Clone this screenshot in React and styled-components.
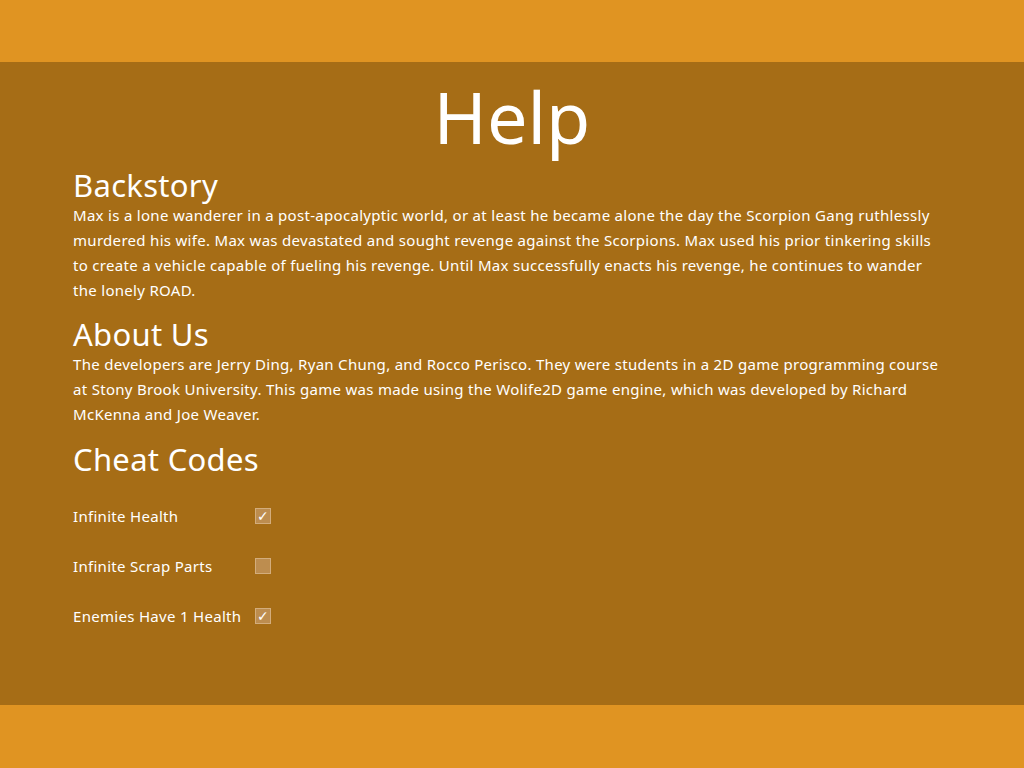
import React, { useState } from "react";
import styled, { createGlobalStyle } from "styled-components";

const GlobalStyle = createGlobalStyle`
    html, body {
        margin: 0;
        padding: 0;
        background: #e09422;
    }
    body {
        font-family: "Noto Sans", "Open Sans", sans-serif;
        color: #ffffff;
    }
`;

const Page = styled.div`
    display: flex;
    flex-direction: column;
    height: 768px;
`;

const Bar = styled.div`
    height: ${(props) => props.size}px;
    background: #e09422;
    flex-shrink: 0;
`;

const Main = styled.main`
    flex: 1;
    background: #a66d16;
    padding: 0 73px;
`;

const Title = styled.h1`
    margin: 0 0 8px;
    padding-top: 11px;
    text-align: center;
    font-weight: 400;
    font-size: 72px;
    line-height: 86px;
`;

const SectionTitle = styled.h2`
    margin: 0;
    font-weight: 400;
    font-size: 31px;
    line-height: 36px;
    letter-spacing: 0.3px;
`;

const Paragraph = styled.p`
    margin: 0 0 ${(props) => props.gap || 0}px;
    max-width: 872px;
    font-size: 15px;
    line-height: 25px;
    letter-spacing: 0.3px;
`;

const CheatList = styled.div`
    display: flex;
    flex-direction: column;
    gap: 26px;
    padding-top: 27px;
`;

const CheatRow = styled.label`
    display: grid;
    grid-template-columns: 182px 16px;
    align-items: center;
    font-size: 15px;
    line-height: 24px;
    letter-spacing: 0.3px;
    cursor: pointer;
`;

const Box = styled.span`
    width: 14px;
    height: 14px;
    border: 1px solid #d3ad7c;
    background: #bd8d4f;
    display: flex;
    align-items: center;
    justify-content: center;
    color: #ffffff;
    font-family: "DejaVu Sans", sans-serif;
    font-size: 14px;
    font-weight: 700;
    line-height: 1;
`;

const cheats = [
    { name: "Infinite Health", on: true },
    { name: "Infinite Scrap Parts", on: false },
    { name: "Enemies Have 1 Health", on: true },
];

export default function App() {
    const [state, setState] = useState(cheats.map((c) => c.on));
    const toggle = (i) => setState((s) => s.map((v, j) => (j === i ? !v : v)));

    return (
        <Page>
            <GlobalStyle />
            <Bar size={62} />
            <Main>
                <Title>Help</Title>
                <SectionTitle>Backstory</SectionTitle>
                <Paragraph gap={13}>
                    Max is a lone wanderer in a post-apocalyptic world, or at least he became alone the day the Scorpion Gang ruthlessly murdered his wife. Max was devastated and sought revenge against the Scorpions. Max used his prior tinkering skills to create a vehicle capable of fueling his revenge. Until Max successfully enacts his revenge, he continues to wander the lonely ROAD.
                </Paragraph>
                <SectionTitle>About Us</SectionTitle>
                <Paragraph gap={14}>
                    The developers are Jerry Ding, Ryan Chung, and Rocco Perisco. They were students in a 2D game programming course at Stony Brook University. This game was made using the Wolife2D game engine, which was developed by Richard McKenna and Joe Weaver.
                </Paragraph>
                <SectionTitle>Cheat Codes</SectionTitle>
                <CheatList>
                    {cheats.map((c, i) => (
                        <CheatRow key={c.name} onClick={() => toggle(i)}>
                            <span>{c.name}</span>
                            <Box>{state[i] ? "✓" : ""}</Box>
                        </CheatRow>
                    ))}
                </CheatList>
            </Main>
            <Bar size={63} />
        </Page>
    );
}
